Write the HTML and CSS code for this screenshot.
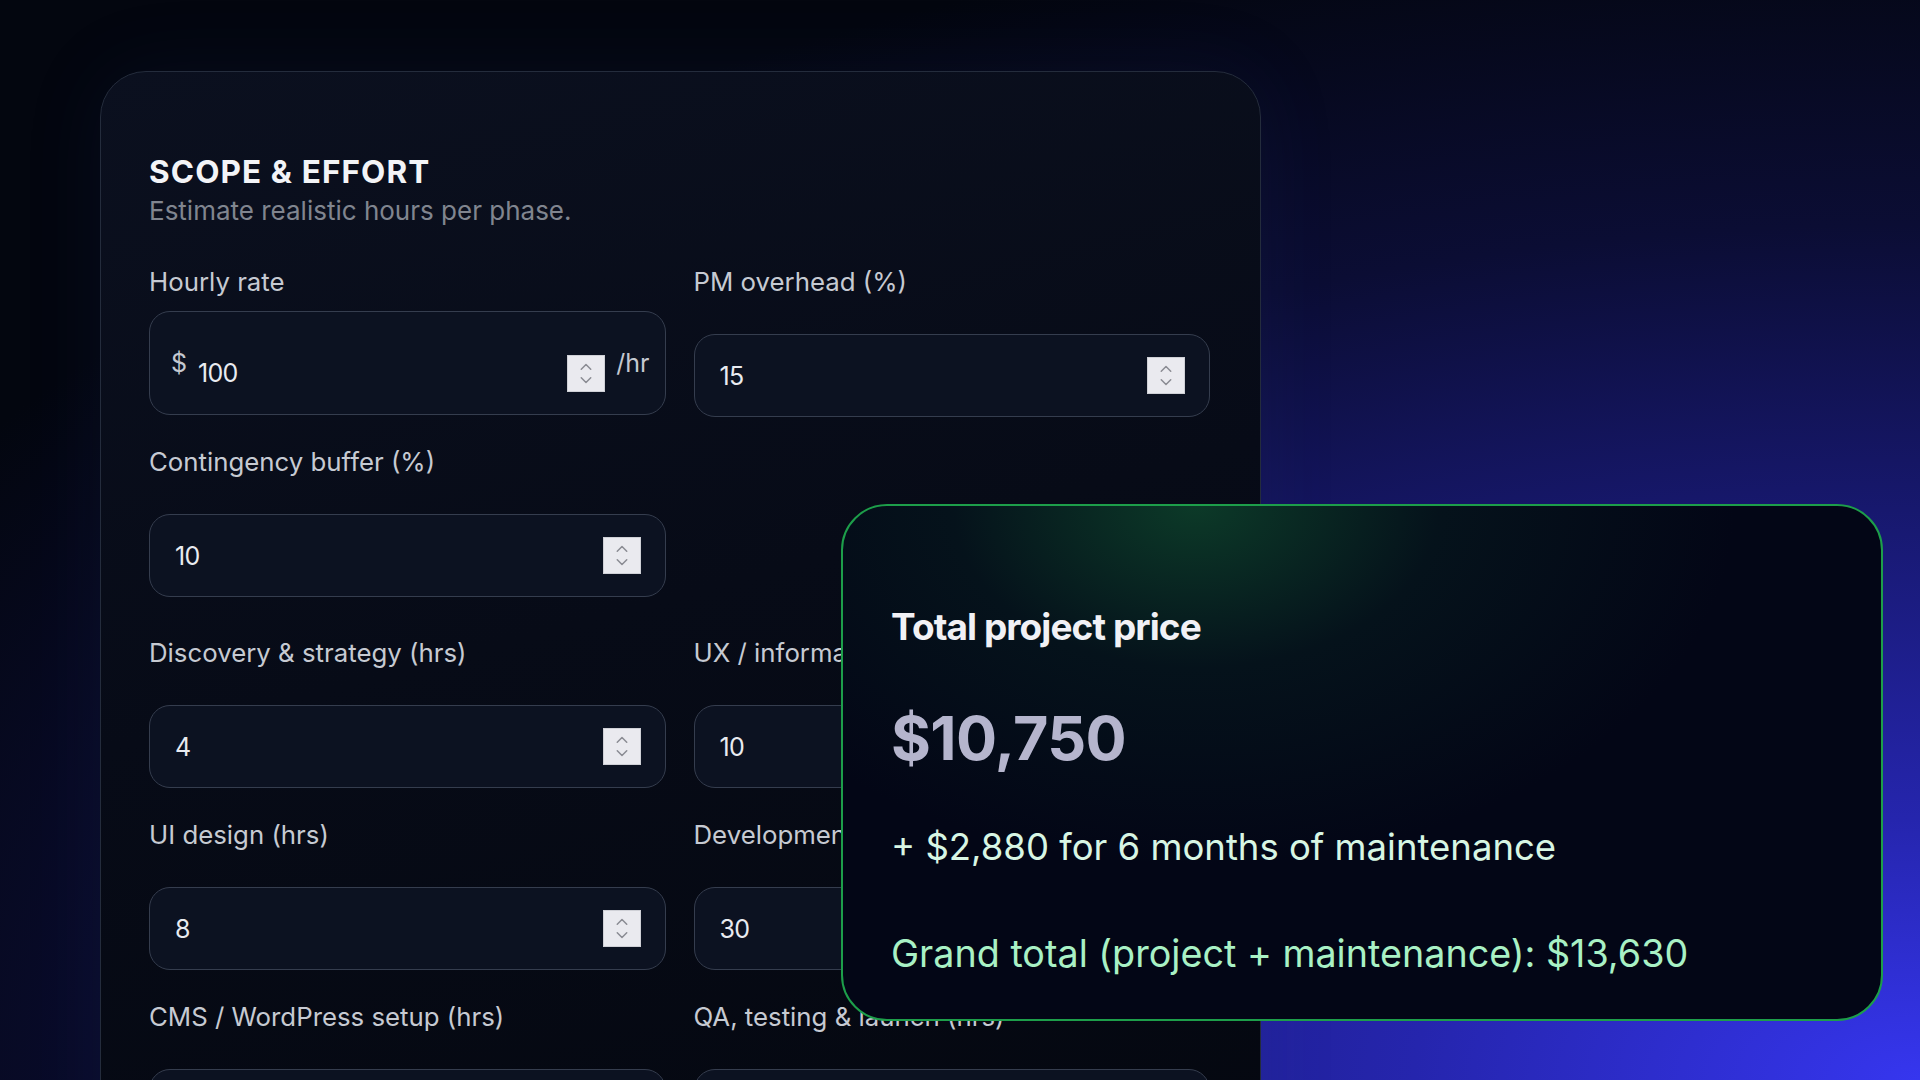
FILE: index.html
```html
<!DOCTYPE html>
<html lang="en">
<head>
<meta charset="utf-8">
<title>Project pricing</title>
<link rel="stylesheet" href="styles.css">
</head>
<body>
<div class="page">
  <section class="panel">
    <header class="panel-head">
      <h2 class="panel-title">SCOPE &amp; EFFORT</h2>
      <p class="panel-sub">Estimate realistic hours per phase.</p>
    </header>

    <div class="grid grid-rates">
      <div class="field field-affix">
        <label class="label">Hourly rate</label>
        <div class="affix-box">
          <span class="affix">$</span>
          <div class="affix-input">
            <span class="value">100</span>
            <span class="spin"><svg viewBox="0 0 38 37" width="38" height="37"><path d="M14 14 L19 9 L24 14" /><path d="M14 23 L19 28 L24 23" /></svg></span>
          </div>
          <span class="affix">/hr</span>
        </div>
      </div>
      <div class="field">
        <label class="label">PM overhead (%)</label>
        <div class="input">
          <span class="value">15</span>
          <span class="spin"><svg viewBox="0 0 38 37" width="38" height="37"><path d="M14 14 L19 9 L24 14" /><path d="M14 23 L19 28 L24 23" /></svg></span>
        </div>
      </div>
      <div class="field">
        <label class="label">Contingency buffer (%)</label>
        <div class="input">
          <span class="value">10</span>
          <span class="spin"><svg viewBox="0 0 38 37" width="38" height="37"><path d="M14 14 L19 9 L24 14" /><path d="M14 23 L19 28 L24 23" /></svg></span>
        </div>
      </div>
    </div>

    <div class="grid grid-hours">
      <div class="field">
        <label class="label">Discovery &amp; strategy (hrs)</label>
        <div class="input">
          <span class="value">4</span>
          <span class="spin"><svg viewBox="0 0 38 37" width="38" height="37"><path d="M14 14 L19 9 L24 14" /><path d="M14 23 L19 28 L24 23" /></svg></span>
        </div>
      </div>
      <div class="field">
        <label class="label">UX / information architecture (hrs)</label>
        <div class="input">
          <span class="value">10</span>
          <span class="spin"><svg viewBox="0 0 38 37" width="38" height="37"><path d="M14 14 L19 9 L24 14" /><path d="M14 23 L19 28 L24 23" /></svg></span>
        </div>
      </div>
      <div class="field">
        <label class="label">UI design (hrs)</label>
        <div class="input">
          <span class="value">8</span>
          <span class="spin"><svg viewBox="0 0 38 37" width="38" height="37"><path d="M14 14 L19 9 L24 14" /><path d="M14 23 L19 28 L24 23" /></svg></span>
        </div>
      </div>
      <div class="field">
        <label class="label">Development (hrs)</label>
        <div class="input">
          <span class="value">30</span>
          <span class="spin"><svg viewBox="0 0 38 37" width="38" height="37"><path d="M14 14 L19 9 L24 14" /><path d="M14 23 L19 28 L24 23" /></svg></span>
        </div>
      </div>
      <div class="field">
        <label class="label">CMS / WordPress setup (hrs)</label>
        <div class="input">
          <span class="value">6</span>
          <span class="spin"><svg viewBox="0 0 38 37" width="38" height="37"><path d="M14 14 L19 9 L24 14" /><path d="M14 23 L19 28 L24 23" /></svg></span>
        </div>
      </div>
      <div class="field">
        <label class="label">QA, testing &amp; launch (hrs)</label>
        <div class="input">
          <span class="value">6</span>
          <span class="spin"><svg viewBox="0 0 38 37" width="38" height="37"><path d="M14 14 L19 9 L24 14" /><path d="M14 23 L19 28 L24 23" /></svg></span>
        </div>
      </div>
    </div>
  </section>

  <aside class="total-card">
    <h3 class="total-title">Total project price</h3>
    <p class="total-price">$10,750</p>
    <p class="total-maint">+ $2,880 for 6 months of maintenance</p>
    <p class="total-grand">Grand total (project + maintenance): $13,630</p>
  </aside>
</div>
</body>
</html>
```

FILE: styles.css
```css
* { box-sizing: border-box; }

html, body {
  margin: 0;
  padding: 0;
  width: 1920px;
  height: 1080px;
  overflow: hidden;
}

body {
  font-family: "Inter", "Noto Sans", sans-serif;
  background:
    radial-gradient(120% 110% at 100% 100%, #3636ef 0%, #2525ad 22%, #17186e 48%, #0b0d34 72%, #03060f 100%);
}

.page {
  position: relative;
  width: 1920px;
  height: 1080px;
  padding-top: 71px;
  padding-left: 100px;
}

/* ---------- Scope panel ---------- */
.panel {
  width: 1161px;
  min-height: 1200px;
  padding: 83px 50px 0 48px;
  border: 1.5px solid #242c3c;
  border-radius: 46px;
  background: linear-gradient(165deg, #0b101f 0%, #070b17 45%, #04070f 100%);
  box-shadow: 0 0 80px rgba(40, 60, 120, 0.12);
}

.panel-title {
  margin: 0;
  font-size: 31.5px;
  line-height: 34px;
  font-weight: 700;
  color: #f3f4f7;
  letter-spacing: 0.035em;
}

.panel-sub {
  margin: 8px 0 0;
  font-size: 26px;
  line-height: 28px;
  color: #80858f;
}

.grid {
  display: grid;
  grid-template-columns: 1fr 1fr;
  column-gap: 28px;
  row-gap: 31px;
}

.grid-rates { margin-top: 43px; }
.grid-hours { margin-top: 42px; row-gap: 33px; }

.field {
  display: flex;
  flex-direction: column;
}

.label {
  display: block;
  font-size: 25.8px;
  line-height: 28px;
  color: #c6cad2;
  margin-bottom: 38px;
}

.field-affix .label { margin-bottom: 15px; }

.input,
.affix-box {
  display: flex;
  align-items: center;
  border: 1.5px solid #353d4e;
  border-radius: 21px;
  background: #0c1221;
}

.input {
  height: 83px;
  padding: 0 24px 0 25px;
}

.affix-box {
  height: 104px;
  padding: 0 15px 0 21px;
}

.affix {
  font-size: 25px;
  color: #c4c8d0;
}

.affix-input {
  flex: 1;
  display: flex;
  align-items: center;
  padding-top: 20px;
  margin-left: 11px;
  margin-right: 11px;
}

.value {
  flex: 1;
  font-size: 25px;
  color: #e9ebf0;
  letter-spacing: -0.03em;
}

.spin {
  width: 38px;
  height: 37px;
  background: #eaeaef;
  border: 1px solid #cfd0d6;
  display: flex;
}

.spin svg {
  display: block;
  width: 36px;
  height: 35px;
}

.spin path {
  fill: none;
  stroke: #8b8c93;
  stroke-width: 1.6;
  stroke-linecap: round;
  stroke-linejoin: round;
}

/* ---------- Total card (overlay) ---------- */
.total-card {
  position: absolute;
  left: 841px;
  top: 504px;
  width: 1042px;
  height: 517px;
  padding: 101px 48px 0 48px;
  border: 2px solid #1d9e4a;
  border-radius: 46px;
  background:
    radial-gradient(52% 70% at 34% 0%, rgba(18, 92, 52, 0.6) 0%, rgba(10, 50, 40, 0.28) 45%, rgba(3, 6, 21, 0) 100%),
    #030616;
}

.total-title {
  margin: 0;
  font-size: 37px;
  line-height: 40px;
  font-weight: 700;
  letter-spacing: -0.025em;
  color: #f1f1f5;
}

.total-price {
  margin: 56px 0 0;
  font-size: 61px;
  line-height: 70px;
  font-weight: 700;
  color: #b5b5cd;
  letter-spacing: -0.01em;
}

.total-maint {
  margin: 51px 0 0;
  font-size: 36.5px;
  line-height: 46px;
  color: #d8f6e4;
}

.total-grand {
  margin: 60px 0 0;
  font-size: 37.7px;
  line-height: 46px;
  color: #a9f1c5;
}
```
